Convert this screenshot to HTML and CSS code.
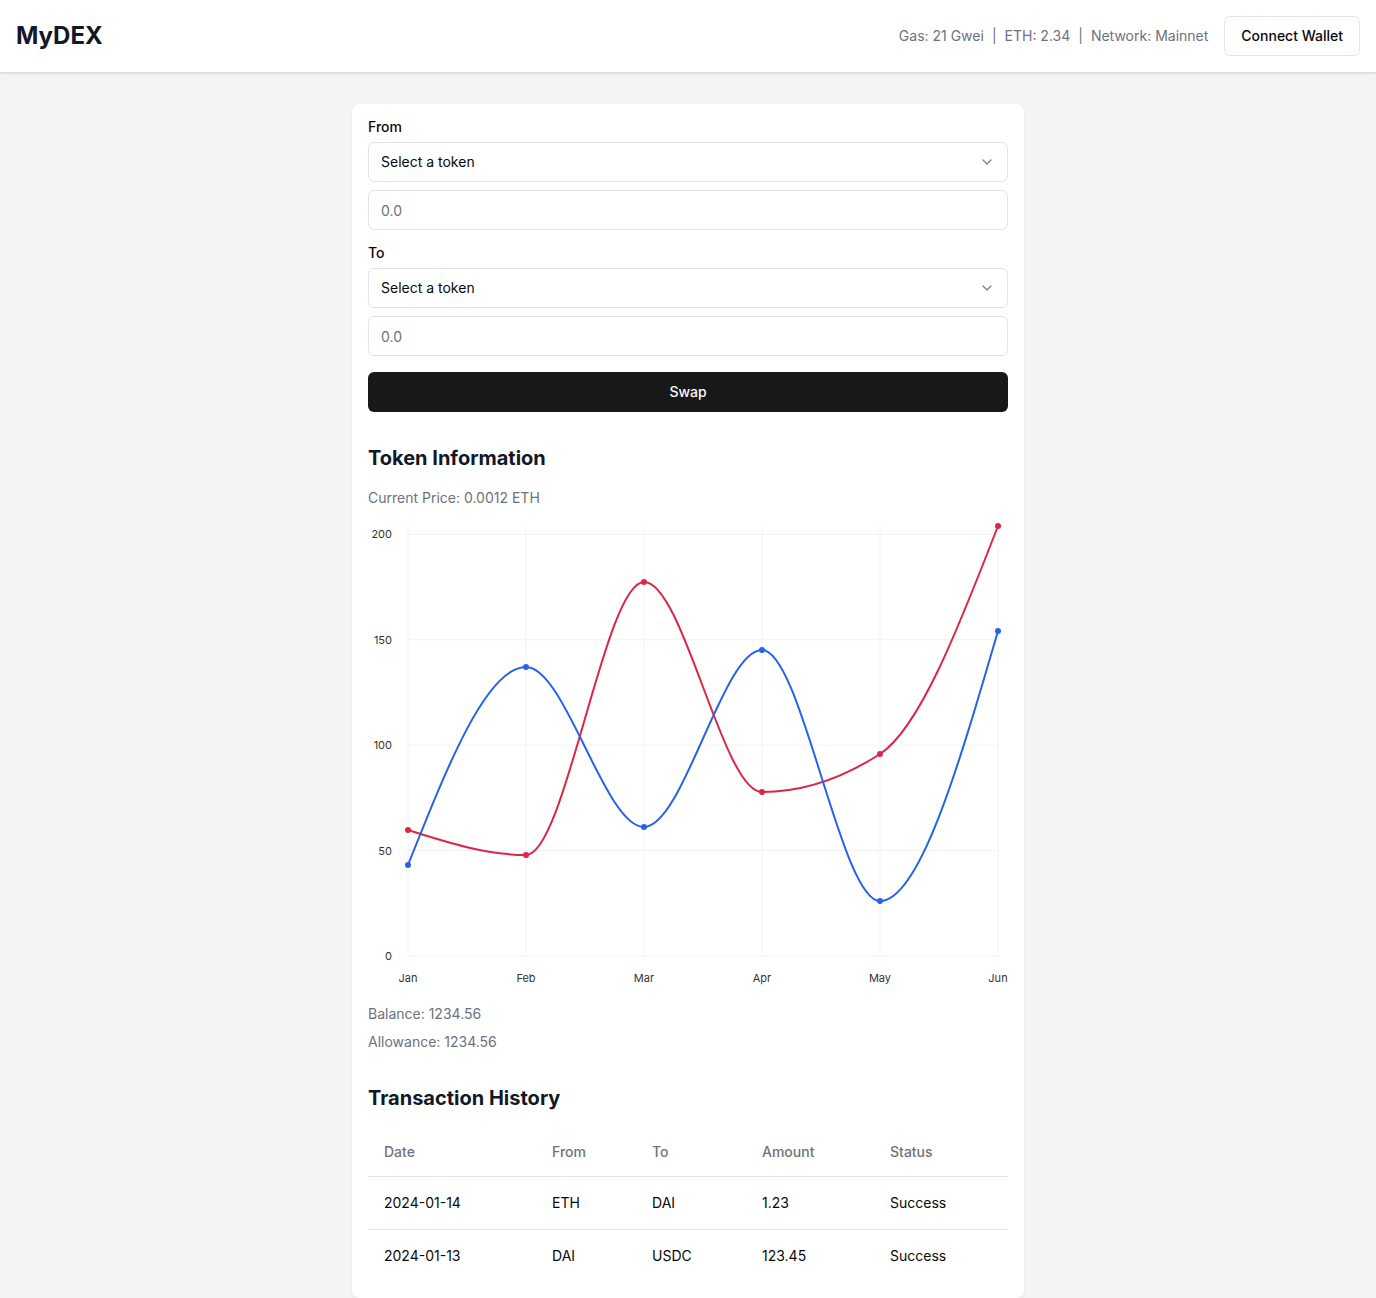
FILE: index.html
```html
<!DOCTYPE html>
<html lang="en">
<head>
<meta charset="utf-8">
<title>MyDEX</title>
<link rel="stylesheet" href="styles.css">
</head>
<body>
<header class="topbar">
  <div class="logo">MyDEX</div>
  <div class="topbar-right">
    <div class="stats">
      <span>Gas: 21 Gwei</span><span class="sep">|</span><span>ETH: 2.34</span><span class="sep">|</span><span>Network: Mainnet</span>
    </div>
    <button class="btn-outline">Connect Wallet</button>
  </div>
</header>

<main class="card">
  <section class="swap">
    <label class="label">From</label>
    <button class="select"><span>Select a token</span>
      <svg class="chev" width="16" height="16" viewBox="0 0 24 24" fill="none" stroke="currentColor" stroke-width="2" stroke-linecap="round" stroke-linejoin="round"><path d="m6 9 6 6 6-6"/></svg>
    </button>
    <input class="input" placeholder="0.0">
    <label class="label label-gap">To</label>
    <button class="select"><span>Select a token</span>
      <svg class="chev" width="16" height="16" viewBox="0 0 24 24" fill="none" stroke="currentColor" stroke-width="2" stroke-linecap="round" stroke-linejoin="round"><path d="m6 9 6 6 6-6"/></svg>
    </button>
    <input class="input" placeholder="0.0">
    <button class="btn-primary">Swap</button>
  </section>

  <section class="info">
    <h2 class="heading">Token Information</h2>
    <p class="muted">Current Price: 0.0012 ETH</p>
    <svg class="chart" width="640" height="479" viewBox="368 516 640 479">
      <g class="grid" stroke="#f1f2f4" stroke-width="1" fill="none">
        <line x1="408" y1="534.4" x2="998" y2="534.4"/>
        <line x1="408" y1="639.8" x2="998" y2="639.8"/>
        <line x1="408" y1="745.2" x2="998" y2="745.2"/>
        <line x1="408" y1="850.6" x2="998" y2="850.6"/>
        <line x1="408" y1="956" x2="998" y2="956"/>
        <line x1="408" y1="526" x2="408" y2="956"/>
        <line x1="526" y1="526" x2="526" y2="956"/>
        <line x1="644" y1="526" x2="644" y2="956"/>
        <line x1="762" y1="526" x2="762" y2="956"/>
        <line x1="880" y1="526" x2="880" y2="956"/>
        <line x1="998" y1="526" x2="998" y2="956"/>
      </g>
      <g class="ticks" font-size="11" fill="#333" text-anchor="end">
        <text x="392" y="538">200</text>
        <text x="392" y="644">150</text>
        <text x="392" y="749">100</text>
        <text x="392" y="855">50</text>
        <text x="392" y="960">0</text>
      </g>
      <g class="ticks" font-size="11" fill="#333" text-anchor="middle">
        <text x="408" y="982">Jan</text>
        <text x="526" y="982">Feb</text>
        <text x="644" y="982">Mar</text>
        <text x="762" y="982">Apr</text>
        <text x="880" y="982">May</text>
        <text x="998" y="982">Jun</text>
      </g>
      <path d="M408,830 C447.33,842.5 486.67,855 526,855 C565.33,855 604.67,582 644,582 C683.33,582 722.67,792 762,792 C801.33,792 840.67,779.33 880,754 C919.33,728.67 958.67,627.33 998,526" fill="none" stroke="#dc2646" stroke-width="2"/>
      <g fill="#dc2646">
        <circle cx="408" cy="830" r="3"/><circle cx="526" cy="855" r="3"/><circle cx="644" cy="582" r="3"/><circle cx="762" cy="792" r="3"/><circle cx="880" cy="754" r="3"/><circle cx="998" cy="526" r="3"/>
      </g>
      <path d="M408,865 C447.33,766 486.67,667 526,667 C565.33,667 604.67,827 644,827 C683.33,827 722.67,650 762,650 C801.33,650 840.67,901 880,901 C919.33,901 958.67,766 998,631" fill="none" stroke="#2563eb" stroke-width="2"/>
      <g fill="#2563eb">
        <circle cx="408" cy="865" r="3"/><circle cx="526" cy="667" r="3"/><circle cx="644" cy="827" r="3"/><circle cx="762" cy="650" r="3"/><circle cx="880" cy="901" r="3"/><circle cx="998" cy="631" r="3"/>
      </g>
    </svg>
    <div class="balances">
      <p class="muted">Balance: 1234.56</p>
      <p class="muted">Allowance: 1234.56</p>
    </div>
  </section>

  <section class="history">
    <h2 class="heading">Transaction History</h2>
    <table class="table">
      <colgroup><col class="c1"><col class="c2"><col class="c3"><col class="c4"><col class="c5"></colgroup>
      <thead>
        <tr><th>Date</th><th>From</th><th>To</th><th>Amount</th><th>Status</th></tr>
      </thead>
      <tbody>
        <tr><td>2024-01-14</td><td>ETH</td><td>DAI</td><td>1.23</td><td>Success</td></tr>
        <tr><td>2024-01-13</td><td>DAI</td><td>USDC</td><td>123.45</td><td>Success</td></tr>
      </tbody>
    </table>
  </section>
</main>
</body>
</html>
```

FILE: styles.css
```css
* { box-sizing: border-box; }
html, body { margin: 0; padding: 0; }
body {
  background: #f3f4f6;
  font-family: Inter, "Noto Sans", "Liberation Sans", sans-serif;
  color: #09090b;
  font-size: 14px;
  line-height: 20px;
}
.topbar {
  height: 72px;
  background: #fff;
  display: flex;
  align-items: center;
  justify-content: space-between;
  padding: 0 16px;
  box-shadow: 0 1px 3px rgba(0,0,0,0.1), 0 1px 2px rgba(0,0,0,0.06);
}
.logo {
  font-size: 24px;
  line-height: 32px;
  font-weight: 700;
  color: #111827;
}
.topbar-right { display: flex; align-items: center; gap: 16px; }
.stats { color: #6b7280; font-size: 14px; display: flex; align-items: center; }
.sep { margin: 0 8px; }
.btn-outline {
  height: 40px;
  padding: 0 16px;
  border: 1px solid #e4e4e7;
  border-radius: 6px;
  background: #fff;
  font: 500 14px/20px Inter, sans-serif;
  color: #09090b;
}
.card {
  width: 672px;
  margin: 32px auto 0;
  background: #fff;
  border-radius: 8px;
  padding: 16px;
  box-shadow: 0 1px 3px rgba(0,0,0,0.06);
}
.swap { display: flex; flex-direction: column; }
.label {
  font-size: 14px;
  line-height: 14px;
  font-weight: 500;
  margin-bottom: 8px;
}
.label-gap { margin-top: 16px; }
.select {
  height: 40px;
  width: 100%;
  border: 1px solid #e4e4e7;
  border-radius: 6px;
  background: #fff;
  padding: 0 12px;
  display: flex;
  align-items: center;
  justify-content: space-between;
  font: 400 14px/20px Inter, sans-serif;
  color: #09090b;
  margin-bottom: 8px;
}
.chev { color: #09090b; opacity: 0.5; }
.input {
  height: 40px;
  width: 100%;
  border: 1px solid #e4e4e7;
  border-radius: 6px;
  padding: 0 12px;
  font: 400 14px/20px Inter, sans-serif;
  color: #09090b;
  background: #fff;
}
.input::placeholder { color: #71717a; }
.btn-primary {
  margin-top: 16px;
  height: 40px;
  width: 100%;
  border: 0;
  border-radius: 6px;
  background: #18181b;
  color: #fafafa;
  font: 500 14px/20px Inter, sans-serif;
}
.info { margin-top: 32px; }
.heading {
  margin: 0 0 16px;
  font-size: 20px;
  line-height: 28px;
  font-weight: 700;
  color: #111827;
}
.muted { margin: 0; color: #6b7280; font-size: 14px; line-height: 20px; }
.chart { display: block; margin-top: 8px; font-family: Inter, sans-serif; }
.balances { margin-top: 9px; display: flex; flex-direction: column; gap: 8px; }
.history { margin-top: 32px; }
.table { width: 100%; border-collapse: collapse; table-layout: fixed; font-size: 14px; }
.c1 { width: 168px; } .c2 { width: 100px; } .c3 { width: 110px; } .c4 { width: 128px; } .c5 { width: 134px; }
.table th {
  height: 48px;
  padding: 0 16px;
  text-align: left;
  font-weight: 500;
  color: #71717a;
  border-bottom: 1px solid #e4e4e7;
}
.table td { padding: 16px; color: #09090b; }
.table tbody tr + tr td { border-top: 1px solid #e4e4e7; }
```
